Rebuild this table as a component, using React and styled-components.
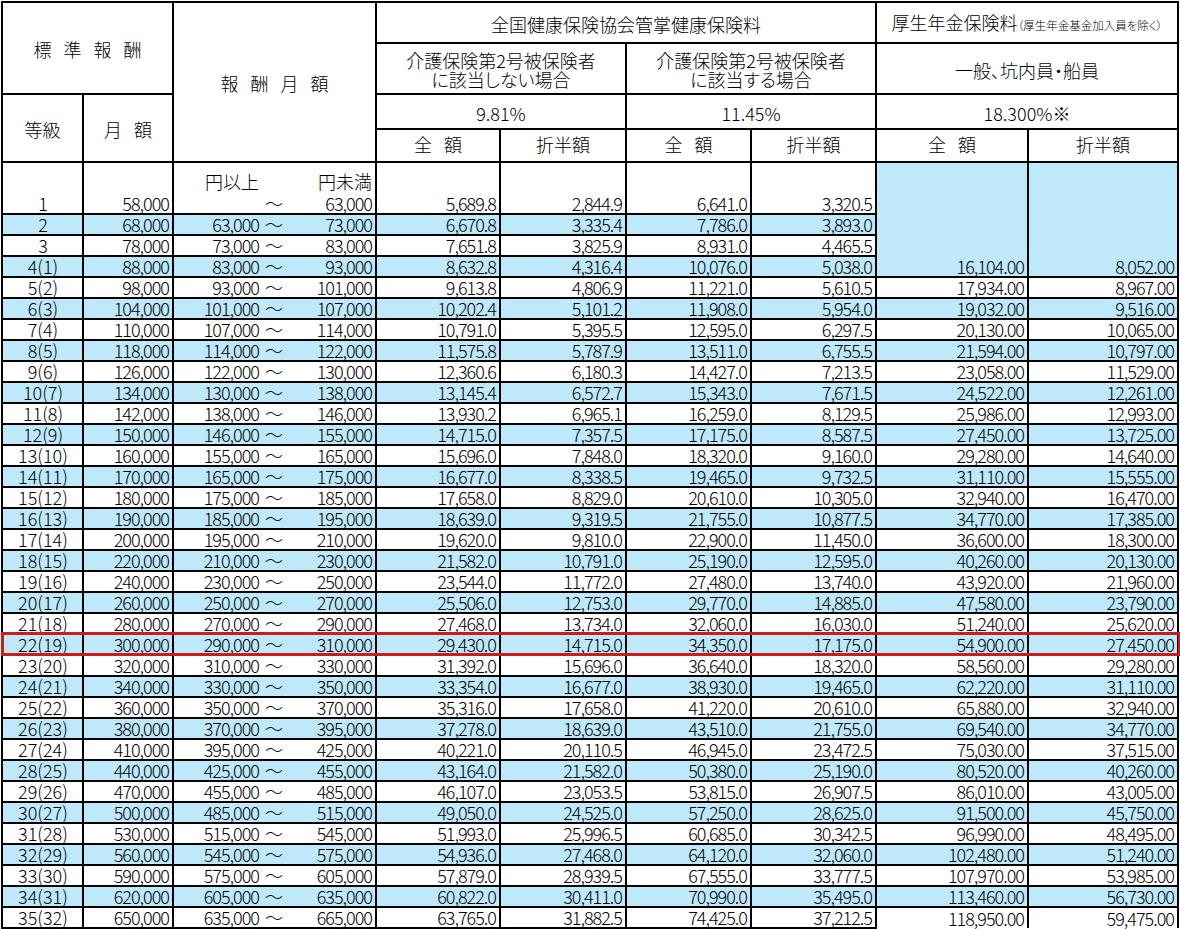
import React from 'react'
import styled, { createGlobalStyle } from 'styled-components'

const GlobalStyle = createGlobalStyle`
  body {
    margin: 0;
    background: #fff;
  }
`

const BLUE = '#bde9fa'

const Page = styled.div`
  padding: 1px 0 0 1px;
  font-family: "Noto Sans CJK JP", "Noto Sans", sans-serif;
  font-feature-settings: "palt";
  font-size: 18px;
  font-weight: 300;
  color: #000;
`

const Sheet = styled.table`
  border-collapse: collapse;
  table-layout: fixed;
  width: 1178px;
`

const Col = styled.col`
  width: ${p => p.$w}px;
`

const Row = styled.tr`
  height: ${p => p.$h}px;
`

const Head = styled.th`
  border: 2px solid #000;
  font-weight: 300;
  padding: ${p => p.$lift ? '0 0 2px' : '3px 0 0'};
  line-height: 19px;
  text-align: center;
  vertical-align: middle;
  white-space: nowrap;
`

const Spaced = styled.span`
  word-spacing: 8px;
`

const Small = styled.span`
  font-size: 11.5px;
`

const Cell = styled.td`
  border: 2px solid #000;
  border-bottom: ${p => p.$open ? 'none' : '2px solid #000'};
  background: ${p => p.$shade ? BLUE : '#fff'};
  padding: 0 3px 0 0;
  line-height: 19px;
  text-align: ${p => p.$center ? 'center' : 'right'};
  vertical-align: bottom;
  white-space: nowrap;
  letter-spacing: -1px;
  position: ${p => p.$marked ? 'relative' : 'static'};
`

const Grade = styled(Cell)`
  padding: 0 0 0 1px;
  letter-spacing: 0;
`

const Range = styled.div`
  display: grid;
  grid-template-columns: 85px 30px 1fr;
  text-align: right;
`

const Wave = styled.span`
  text-align: center;
  letter-spacing: 0;
`

const UnitLine = styled.div`
  margin-bottom: 3px;
  letter-spacing: 0;
`

const Highlight = styled.div`
  position: absolute;
  left: -2px;
  top: -3px;
  bottom: -2px;
  width: 1180px;
  box-sizing: border-box;
  border: 3px solid #cc1c1c;
  pointer-events: none;
  z-index: 1;
`

const monthly = [58, 68, 78, 88, 98, 104, 110, 118, 126, 134, 142, 150, 160, 170, 180, 190, 200,
  220, 240, 260, 280, 300, 320, 340, 360, 380, 410, 440, 470, 500, 530, 560, 590, 620, 650]
const bounds = [null, 63, 73, 83, 93, 101, 107, 114, 122, 130, 138, 146, 155, 165, 175, 185, 195,
  210, 230, 250, 270, 290, 310, 330, 350, 370, 395, 425, 455, 485, 515, 545, 575, 605, 635, 665]

const fmt = (n, d) => n.toLocaleString('en-US', { minimumFractionDigits: d, maximumFractionDigits: d })

const rows = monthly.map((m, i) => {
  const yen = m * 1000
  const g = i + 1
  return {
    grade: g <= 3 ? `${g}` : `${g}(${g - 3})`,
    shade: g % 2 === 0,
    monthly: fmt(yen, 0),
    from: bounds[i] ? fmt(bounds[i] * 1000, 0) : '',
    to: fmt(bounds[i + 1] * 1000, 0),
    h1: fmt(yen * 981 / 10000, 1),
    h1half: fmt(yen * 981 / 20000, 1),
    h2: fmt(yen * 1145 / 10000, 1),
    h2half: fmt(yen * 1145 / 20000, 1),
    p: fmt(Math.max(yen, 88000) * 183 / 1000, 2),
    phalf: fmt(Math.max(yen, 88000) * 183 / 2000, 2),
  }
})

function DataRow({ r, index, last }) {
  const first = index === 0
  return (
    <Row $h={first ? 52 : 21}>
      <Grade $center $shade={r.shade} $marked={index === 21}>
        {r.grade}
        {index === 21 && <Highlight />}
      </Grade>
      <Cell $shade={r.shade}>{r.monthly}</Cell>
      <Cell $shade={r.shade}>
        {first && (
          <Range>
            <UnitLine>円以上</UnitLine>
            <span />
            <UnitLine>円未満</UnitLine>
          </Range>
        )}
        <Range>
          <span>{r.from}</span>
          <Wave>～</Wave>
          <span>{r.to}</span>
        </Range>
      </Cell>
      <Cell $shade={r.shade}>{r.h1}</Cell>
      <Cell $shade={r.shade}>{r.h1half}</Cell>
      <Cell $shade={r.shade}>{r.h2}</Cell>
      <Cell $shade={r.shade}>{r.h2half}</Cell>
      {first && (
        <>
          <Cell rowSpan={4} $shade>{rows[3].p}</Cell>
          <Cell rowSpan={4} $shade>{rows[3].phalf}</Cell>
        </>
      )}
      {index > 3 && (
        <>
          <Cell $shade={r.shade} $open={last}>{r.p}</Cell>
          <Cell $shade={r.shade} $open={last}>{r.phalf}</Cell>
        </>
      )}
    </Row>
  )
}

export default function App() {
  return (
    <Page>
      <GlobalStyle />
      <Sheet>
        <colgroup>
          <Col $w={81} />
          <Col $w={90} />
          <Col $w={203} />
          <Col $w={124} />
          <Col $w={126} />
          <Col $w={125} />
          <Col $w={125} />
          <Col $w={152} />
          <Col $w={150} />
        </colgroup>
        <thead>
          <Row $h={41}>
            <Head colSpan={2} rowSpan={2}><Spaced>標 準 報 酬</Spaced></Head>
            <Head rowSpan={4}><Spaced>報 酬 月 額</Spaced></Head>
            <Head colSpan={4}>全国健康保険協会管掌健康保険料</Head>
            <Head colSpan={2}>厚生年金保険料<Small>（厚生年金基金加入員を除く）</Small></Head>
          </Row>
          <Row $h={51}>
            <Head colSpan={2}>介護保険第2号被保険者<br />に該当しない場合</Head>
            <Head colSpan={2}>介護保険第2号被保険者<br />に該当する場合</Head>
            <Head colSpan={2}>一般、坑内員・船員</Head>
          </Row>
          <Row $h={35}>
            <Head rowSpan={2}>等級</Head>
            <Head rowSpan={2}><Spaced>月 額</Spaced></Head>
            <Head colSpan={2}>9.81%</Head>
            <Head colSpan={2}>11.45%</Head>
            <Head colSpan={2}>18.300%※</Head>
          </Row>
          <Row $h={33}>
            <Head $lift><Spaced>全 額</Spaced></Head>
            <Head $lift>折半額</Head>
            <Head $lift><Spaced>全 額</Spaced></Head>
            <Head $lift>折半額</Head>
            <Head $lift><Spaced>全 額</Spaced></Head>
            <Head $lift>折半額</Head>
          </Row>
        </thead>
        <tbody>
          {rows.map((r, i) => (
            <DataRow key={r.grade} r={r} index={i} last={i === rows.length - 1} />
          ))}
        </tbody>
      </Sheet>
    </Page>
  )
}
